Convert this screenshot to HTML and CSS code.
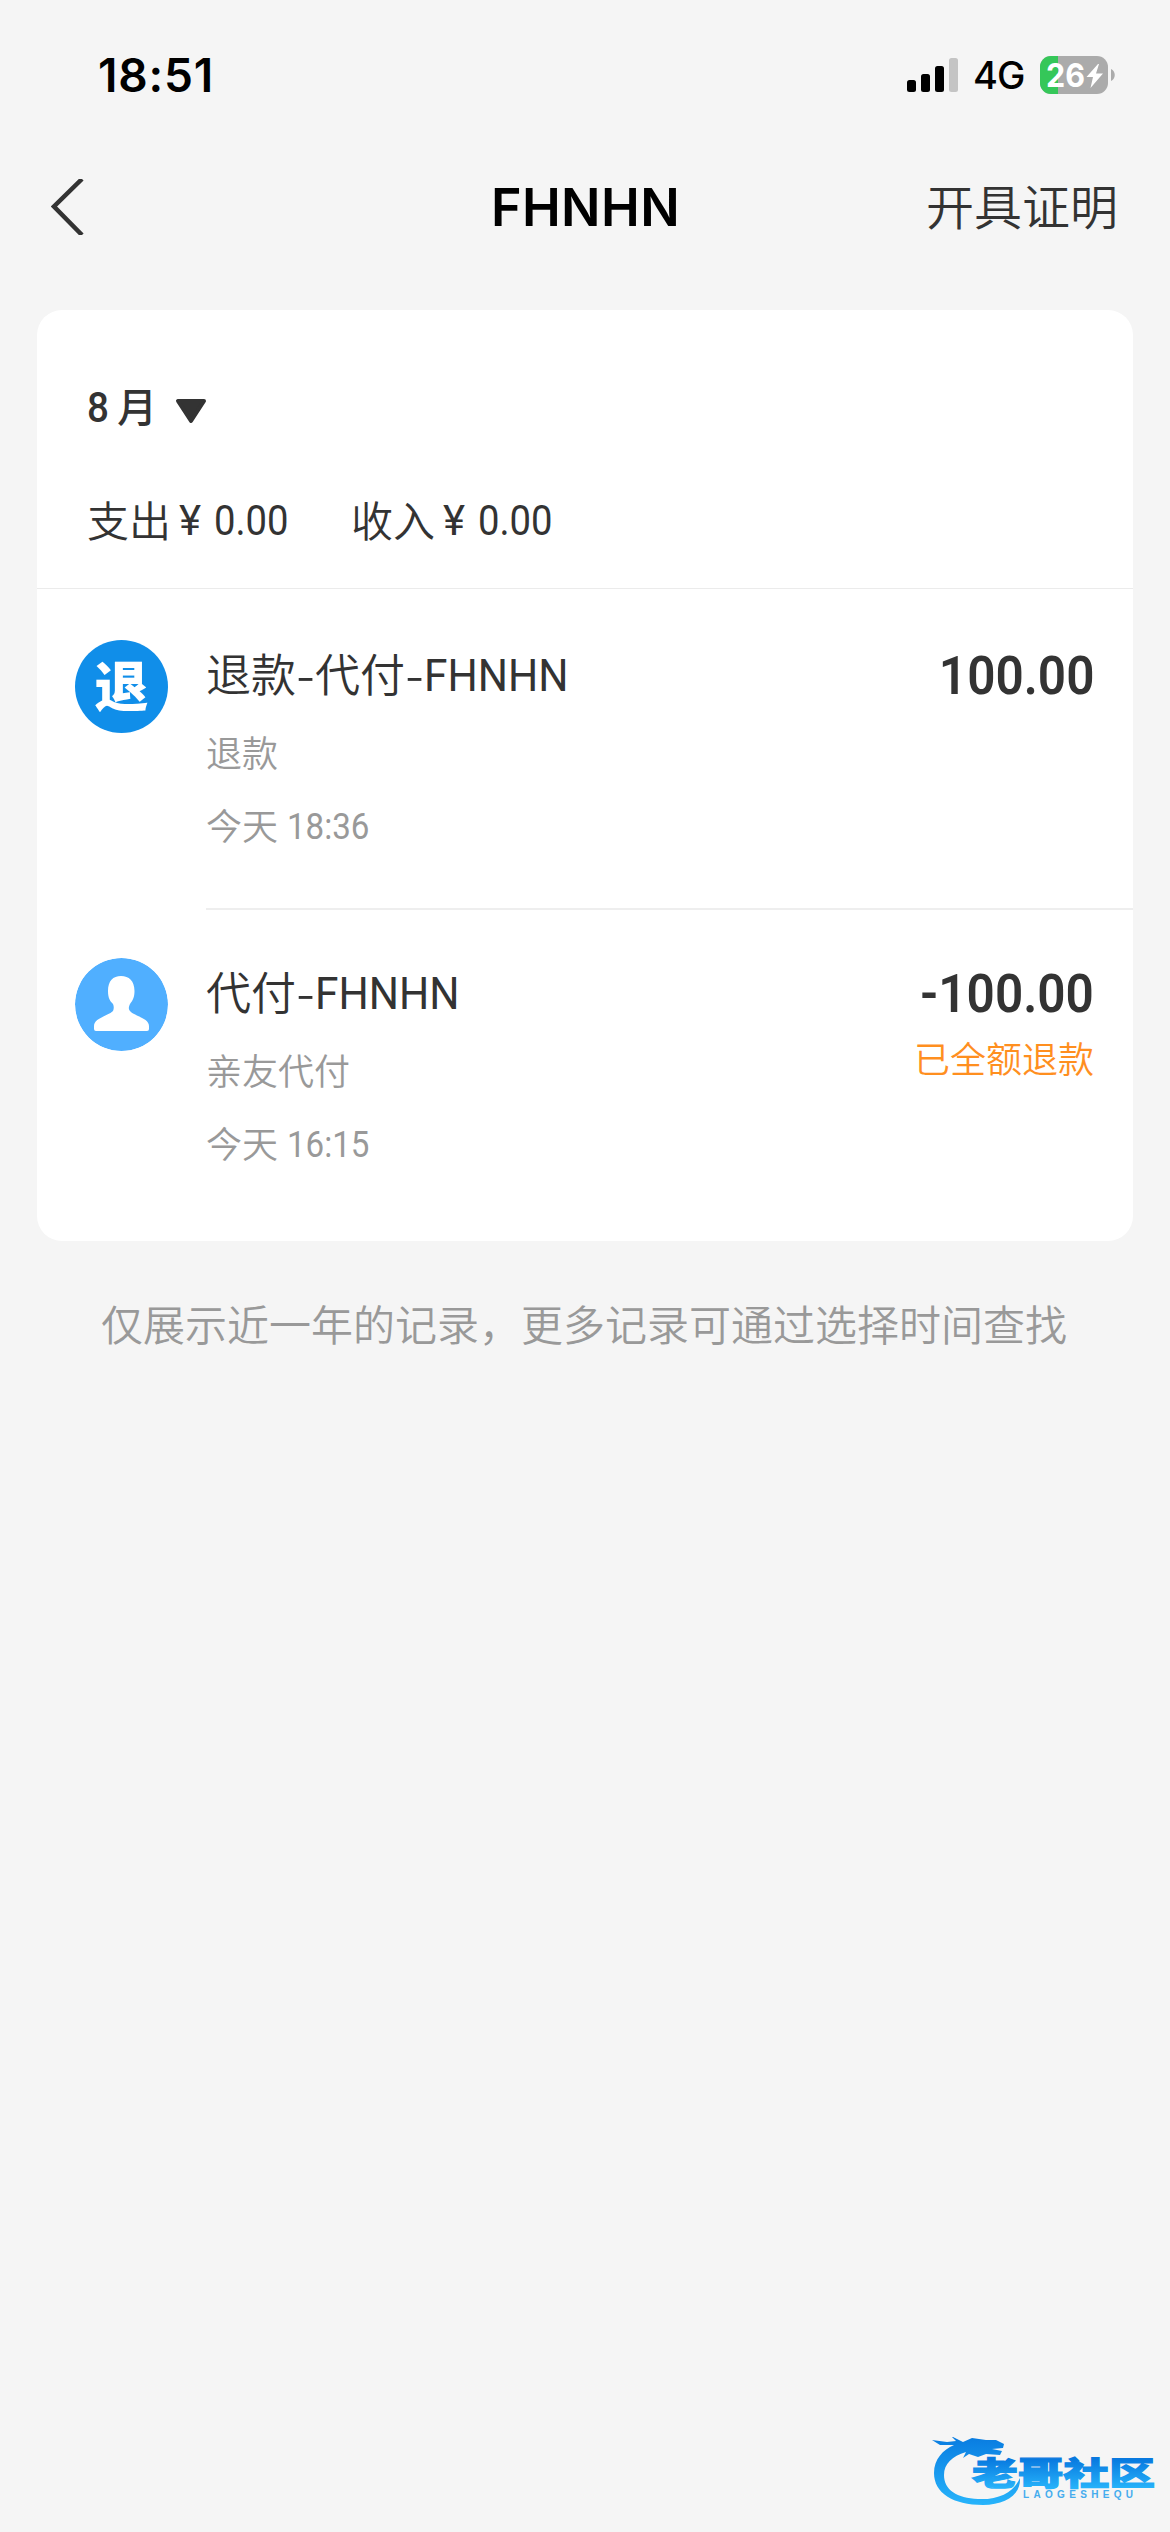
FILE: index.html
```html
<!DOCTYPE html>
<html lang="zh-CN">
<head>
<meta charset="utf-8">
<title>FHNHN</title>
<link rel="stylesheet" href="styles.css">
</head>
<body>
<div class="status">
  <span class="clock">18:51</span>
  <div class="indicators">
    <svg class="signal" width="51" height="34" viewBox="0 0 51 34">
      <rect x="0" y="22" width="9" height="12" rx="2.5"/>
      <rect x="14" y="16" width="9" height="18" rx="2.5"/>
      <rect x="28" y="8" width="9" height="26" rx="2.5"/>
      <rect x="42" y="0" width="9" height="34" rx="2.5" fill="#c4c4c4"/>
    </svg>
    <span class="network">4G</span>
    <svg class="battery" width="75" height="38" viewBox="0 0 75 38">
      <rect width="68" height="38" rx="11" fill="#ababab"/>
      <path d="M18 0H11A11 11 0 0 0 0 11V27A11 11 0 0 0 11 38H18Z" fill="#35c759"/>
      <path d="M71 13C76 15 76 23 71 25Z" fill="#ababab"/>
      <text class="level" x="6" y="31" textLength="39" lengthAdjust="spacingAndGlyphs">26</text>
      <path d="M58 8L46.500 21H53L50.500 32L63 17.500H56L59 8Z" fill="#fff"/>
    </svg>
  </div>
</div>
<header class="nav">
  <svg class="back" width="34" height="56" viewBox="0 0 34 56"><path d="M31 0L3 27.500L31 56" fill="none" stroke="#333" stroke-width="4.500"/></svg>
  <h1 class="title">FHNHN</h1>
  <span class="action">开具证明</span>
</header>
<main class="card">
  <section class="summary">
    <div class="month"><span class="num eight">8</span><span class="unit">月</span>
      <svg class="caret" width="32" height="25" viewBox="0 0 32 25"><path d="M3 2H29L16 22Z" fill="#333" stroke="#333" stroke-width="4" stroke-linejoin="round"/></svg>
    </div>
    <div class="totals">
      <div class="total"><span>支出</span><span class="num yen">¥</span><span class="num zero">0.00</span></div>
      <div class="total"><span>收入</span><span class="num yen">¥</span><span class="num zero">0.00</span></div>
    </div>
  </section>
  <article class="row">
    <div class="avatar refund">退</div>
    <div class="body">
      <div class="info">
        <div class="name">退款<i class="dash">-</i>代付<i class="dash">-</i><span class="latin">FHNHN</span></div>
        <div class="note">退款</div>
        <div class="note time">今天<span class="num clocknum">18:36</span></div>
      </div>
      <div class="side"><div class="amount">100.00</div></div>
    </div>
  </article>
  <article class="row">
    <svg class="avatar" viewBox="0 0 93 93"><circle cx="46.500" cy="46.500" r="46.500" fill="#50afff"/><path d="M46 18C38 18 33 23 33 33C33 40 35 43 38 46C39 48 39 51 38 53C33 58 19 60 19 68V71Q19 73 21 73H72Q74 73 74 71V68C74 60 59 58 55 53C53 51 54 48 55 46C58 42 59.500 39 59.500 33C59.500 23 54 18 46 18Z" fill="#fff"/></svg>
    <div class="body">
      <div class="info">
        <div class="name">代付<i class="dash">-</i><span class="latin">FHNHN</span></div>
        <div class="note">亲友代付</div>
        <div class="note time">今天<span class="num clocknum">16:15</span></div>
      </div>
      <div class="side"><div class="amount">-100.00</div><div class="tag">已全额退款</div></div>
    </div>
  </article>
</main>
<p class="hint">仅展示近一年的记录，更多记录可通过选择时间查找</p>
<footer class="brand">
  <svg width="230" height="80" viewBox="0 0 230 80">
    <defs><linearGradient id="sea" x1="0" y1="0" x2="0" y2="1"><stop offset="0" stop-color="#087be0"/><stop offset="1" stop-color="#27b4fb"/></linearGradient>
    <linearGradient id="word" gradientUnits="userSpaceOnUse" x1="0" y1="22" x2="0" y2="52"><stop offset="0" stop-color="#0879df"/><stop offset="1" stop-color="#27b4fb"/></linearGradient></defs>
    <path transform="translate(0 -7)" d="M0 10L15 12L24 11L19 6L31 12L40 8L54 10L64 10L72 14L71 18L60 19L70 21L68 25L54 24L46 27L37 24L31 28L34 22C20 26 12 34 12 45C12 60 25 68 46 69C67 70 82 62 88 48C89 65 73 75 51 75C21 75 2 63 2 43C2 29 11 20 22 15L8 15Z" fill="url(#sea)"/>
    <text class="wordmark" x="40" y="48" textLength="183" lengthAdjust="spacingAndGlyphs" fill="url(#word)" stroke="url(#word)" stroke-width="1.2">老哥社区</text>
    <text class="pinyin" x="91" y="61" textLength="110">LAOGESHEQU</text>
  </svg>
</footer>
</body>
</html>
```
FILE: styles.css
```css
* { box-sizing: border-box; }
body {
  margin: 0;
  width: 1170px;
  height: 2532px;
  display: flex;
  flex-direction: column;
  background: #f5f5f5;
  color: #333;
  font-family: "Noto Sans CJK SC", sans-serif;
  font-weight: 350;
}
.status {
  height: 150px;
  padding: 0 55px 0 98px;
  display: flex;
  justify-content: space-between;
  align-items: center;
  font-family: Inter, sans-serif;
  color: #000;
}
.clock { font-size: 46px; font-weight: 600; line-height: 50px; letter-spacing: .8px; }
.indicators { display: flex; align-items: center; }
.network { margin-left: 15px; width: 67px; font-size: 38px; font-weight: 500; letter-spacing: -1px; line-height: 44px; }
.level { font: 700 33px Inter, sans-serif; fill: #fff; }
.nav {
  height: 114px;
  padding: 0 52px 0 51px;
  display: grid;
  grid-template-columns: 1fr auto 1fr;
  align-items: center;
}
.title { margin: 0; padding: 2px 0 0 2px; font: 600 52px/60px Inter, sans-serif; letter-spacing: .4px; color: #000; }
.action { justify-self: end; font-size: 48px; line-height: 60px; padding-bottom: 6px; }
.card {
  height: 931px;
  margin: 46px 37px 0;
  background: #fff;
  border-radius: 25px;
  overflow: hidden;
}
.summary { height: 279px; padding: 65px 50px 0; border-bottom: 1px solid #ebebeb; }
.num, .latin, .amount { font-family: Roboto, sans-serif; font-weight: 400; }
.num, .latin { display: inline-block; transform-origin: left; }
.num { padding-top: 5px; }
.month { display: flex; align-items: center; height: 60px; font-size: 42px; font-weight: 500; }
.eight { width: 30px; font-weight: 500; transform: scaleX(.92); }
.unit { width: 42px; font-size: 40px; }
.caret { margin: 12px 0 0 16px; }
.totals { display: flex; margin-top: 53px; height: 60px; align-items: center; font-size: 42px; }
.total { width: 264px; display: flex; align-items: center; }
.yen { width: 35px; margin-left: 8px; }
.zero { transform: scaleX(.91); }
.row { display: flex; height: 318px; }
.avatar { width: 93px; height: 93px; margin: 51px 38px 0 38px; flex: none; border-radius: 50%; }
.refund { background: #108ee9; color: #fff; font-size: 54px; font-weight: 900; line-height: 88px; text-align: center; }
.body { flex: 1; display: flex; justify-content: space-between; padding: 54px 39px 0 0; }
.row + .row .body { border-top: 2px solid #eee; padding-top: 51px; margin-top: 1px; }
.row + .row { height: 334px; }
.name { font-size: 45px; line-height: 60px; display: flex; align-items: center; }
.dash { font-style: normal; width: 19px; text-align: center; transform: scaleX(1.2); }
.latin { font-size: 44px; line-height: 54px; padding-top: 6px; transform: scaleX(.965); }
.note { font-size: 36px; line-height: 54px; margin-top: 21px; color: #999; }
.time { margin-top: 19px; display: flex; align-items: center; height: 54px; }
.clocknum { margin-left: 9px; transform: scaleX(.92); }
.side { text-align: right; padding-top: 3px; }
.amount { font-size: 53px; font-weight: 600; line-height: 60px; transform: scaleX(.935); transform-origin: right; }
.tag { font-size: 36px; line-height: 54px; margin-top: 6px; color: #ff8f1f; }
.hint { margin: 52px 0 0; padding-right: 2px; text-align: center; font-size: 42px; line-height: 60px; color: #999; }
.brand { margin: auto 0 15px 932px; height: 80px; }
.wordmark { font: 900 32px "Noto Sans CJK SC", sans-serif; }
.pinyin { font: 700 10px "Liberation Sans", sans-serif; fill: #45acee; }
```
